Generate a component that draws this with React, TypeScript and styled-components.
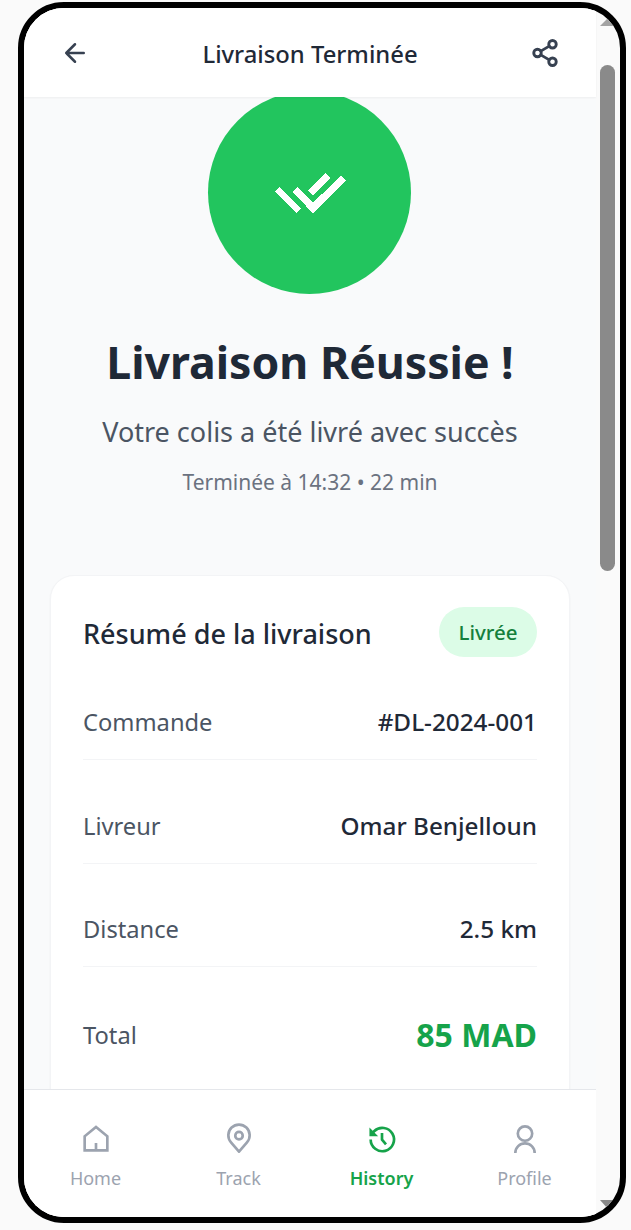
import React from "react";
import styled, { createGlobalStyle } from "styled-components";

const Global = createGlobalStyle`
  html, body { margin: 0; padding: 0; background: #fafafa; }
  body { font-family: "Noto Sans", "Open Sans", sans-serif; }
`;

const Page = styled.div`
  width: 631px;
  height: 1230px;
  padding: 2px 5px 7px 18px;
  box-sizing: border-box;
  overflow: hidden;
`;

const Phone = styled.div`
  position: relative;
  height: 100%;
  box-sizing: border-box;
  border: 6px solid #000;
  border-radius: 46px;
  overflow: hidden;
  display: flex;
  background: #fafafa;
`;

const Column = styled.div`
  width: 572px;
  display: flex;
  flex-direction: column;
  background: #f9fafb;
`;

const Header = styled.header`
  height: 89px;
  flex: none;
  box-sizing: border-box;
  background: #fff;
  position: relative;
  z-index: 2;
  box-shadow: 0 1px 2px rgba(0, 0, 0, 0.05);
  display: flex;
  align-items: center;
  justify-content: space-between;
  padding: 0 36px;
`;

const HeaderTitle = styled.h1`
  margin: 2px 0 0;
  font-size: 23.8px;
  font-weight: 500;
  color: #1f2937;
`;

const HeaderIcon = styled.svg`
  width: 30px;
  height: 30px;
  display: block;
  color: #374151;
`;

const Main = styled.main`
  flex: 1;
  min-height: 0;
  overflow: hidden;
  padding: 0 26px;
  display: flex;
  flex-direction: column;
  align-items: center;
`;

const Circle = styled.div`
  width: 203px;
  height: 203px;
  flex: none;
  margin: -6px 1px 0 0;
  border-radius: 50%;
  background: #22c55e;
  display: flex;
  align-items: center;
  justify-content: center;
`;

const Heading = styled.h2`
  margin: 38px 0 0;
  font-size: 44.6px;
  line-height: 60px;
  font-weight: 700;
  color: #1f2937;
`;

const Sub = styled.p`
  margin: 20px 0 0;
  font-size: 27px;
  line-height: 40px;
  color: #4b5563;
`;

const Meta = styled.p`
  margin: 15px 0 0;
  font-size: 21px;
  line-height: 30px;
  color: #6b7280;
`;

const Card = styled.section`
  align-self: stretch;
  margin-top: 78px;
  flex: none;
  height: 600px;
  box-sizing: border-box;
  background: #fff;
  border: 1px solid #f3f4f6;
  border-radius: 24px;
  box-shadow: 0 1px 2px rgba(0, 0, 0, 0.05);
  padding: 31px 32px;
`;

const CardHead = styled.div`
  display: flex;
  align-items: center;
  justify-content: space-between;
  margin-bottom: 48px;
`;

const CardTitle = styled.h3`
  margin: 2px 0 0;
  font-size: 27px;
  font-weight: 500;
  color: #1f2937;
`;

const Badge = styled.span`
  height: 50px;
  width: 98px;
  box-sizing: border-box;
  display: flex;
  align-items: center;
  justify-content: center;
  border-radius: 25px;
  background: #dcfce7;
  color: #15803d;
  font-size: 20.5px;
  font-weight: 500;
`;

const Row = styled.div<{ $last?: boolean }>`
  display: flex;
  align-items: center;
  justify-content: space-between;
  min-height: 34px;
  padding-bottom: ${(p) => (p.$last ? "0" : "20px")};
  margin-bottom: ${(p) => (p.$last ? "0" : "48.5px")};
  border-bottom: ${(p) => (p.$last ? "none" : "1px solid #f3f4f6")};
`;

const RowLabel = styled.span`
  font-size: 23.7px;
  line-height: 34px;
  color: #4b5563;
`;

const RowValue = styled.span<{ $accent?: boolean }>`
  font-size: ${(p) => (p.$accent ? "32px" : "24.3px")};
  line-height: ${(p) => (p.$accent ? "38px" : "34px")};
  font-weight: ${(p) => (p.$accent ? 700 : 500)};
  color: ${(p) => (p.$accent ? "#16a34a" : "#1f2937")};
`;

const Nav = styled.nav`
  height: 128px;
  flex: none;
  box-sizing: border-box;
  background: #fff;
  border-top: 1px solid #e5e7eb;
  display: grid;
  grid-template-columns: repeat(4, 1fr);
  position: relative;
  z-index: 2;
`;

const NavItem = styled.div<{ $active?: boolean }>`
  display: flex;
  flex-direction: column;
  align-items: center;
  padding-top: 33px;
  color: ${(p) => (p.$active ? "#16a34a" : "#9ca3af")};
  font-size: 18px;
  line-height: 24px;
  font-weight: ${(p) => (p.$active ? 600 : 400)};
`;

const NavIcon = styled.svg`
  width: 32px;
  height: 32px;
  display: block;
  margin-bottom: 11px;
`;

const Scrollbar = styled.div`
  flex: 1;
  display: flex;
  flex-direction: column;
  align-items: flex-start;
  padding-left: 4px;
`;

const Arrow = styled.div<{ $down?: boolean }>`
  width: 0;
  height: 0;
  flex: none;
  border-left: 8px solid transparent;
  border-right: 8px solid transparent;
  ${(p) =>
    p.$down
      ? "border-top: 9px solid #8a8a8a; margin-top: 629px;"
      : "border-bottom: 8px solid #a3a3a3; margin-top: 10px;"}
`;

const Thumb = styled.div`
  width: 15px;
  height: 506px;
  flex: none;
  margin-top: 39px;
  background: #8a8a8a;
  border-radius: 8px;
`;

const stroke = { fill: "none", stroke: "currentColor", strokeWidth: 2, strokeLinecap: "round", strokeLinejoin: "round" } as const;

export default function App() {
  return (
    <>
      <Global />
      <Page>
        <Phone>
          <Column>
            <Header>
              <HeaderIcon viewBox="0 0 24 24" {...stroke}>
                <path d="M12 19l-7-7 7-7M5 12h14" />
              </HeaderIcon>
              <HeaderTitle>Livraison Terminée</HeaderTitle>
              <HeaderIcon viewBox="0 0 24 24" {...stroke} strokeWidth={2.3}>
                <circle cx="18" cy="5" r="3" />
                <circle cx="6" cy="12" r="3" />
                <circle cx="18" cy="19" r="3" />
                <path d="M8.6 13.5l6.8 4M15.4 6.5l-6.8 4" />
              </HeaderIcon>
            </Header>
            <Main>
              <Circle>
                <svg width="72" height="44" viewBox="274 170 72 44" fill="#fff" shapeRendering="crispEdges">
                  <polygon points="279,186 301,207.5 296.5,212 274.5,190.5" />
                  <polygon points="292.5,190.5 297,186 313,201.5 341,175 346,180 313,212.5" />
                  <polygon points="308.5,189.5 325,172 330,177 313,194.5" />
                </svg>
              </Circle>
              <Heading>Livraison Réussie !</Heading>
              <Sub>Votre colis a été livré avec succès</Sub>
              <Meta>Terminée à 14:32 • 22 min</Meta>
              <Card>
                <CardHead>
                  <CardTitle>Résumé de la livraison</CardTitle>
                  <Badge>Livrée</Badge>
                </CardHead>
                <Row>
                  <RowLabel>Commande</RowLabel>
                  <RowValue>#DL-2024-001</RowValue>
                </Row>
                <Row>
                  <RowLabel>Livreur</RowLabel>
                  <RowValue>Omar Benjelloun</RowValue>
                </Row>
                <Row>
                  <RowLabel>Distance</RowLabel>
                  <RowValue>2.5 km</RowValue>
                </Row>
                <Row $last>
                  <RowLabel>Total</RowLabel>
                  <RowValue $accent>85 MAD</RowValue>
                </Row>
              </Card>
            </Main>
            <Nav>
              <NavItem>
                <NavIcon viewBox="0 0 24 24" {...stroke} strokeLinecap="butt" strokeLinejoin="miter">
                  <path d="M3.5 20.5V10L12 3l8.5 7v10.5zM12 20.5V15" />
                </NavIcon>
                Home
              </NavItem>
              <NavItem>
                <NavIcon viewBox="0 0 24 24" {...stroke}>
                  <path d="M12 21.5L6 14.5a8 8 0 1 1 12 0z" />
                  <circle cx="12" cy="9.5" r="2.8" />
                </NavIcon>
                Track
              </NavItem>
              <NavItem $active>
                <NavIcon viewBox="0 0 24 24" {...stroke} strokeLinecap="butt">
                  <path d="M3.5 12.4a8.75 8.75 0 1 0 2.6-6.2L3.8 8.5" />
                  <path d="M2.6 3.4v6.5h6.5z" fill="currentColor" stroke="none" />
                  <path d="M12 7.5v5l3 3.5" />
                </NavIcon>
                History
              </NavItem>
              <NavItem>
                <NavIcon viewBox="0 0 24 24" {...stroke} strokeLinecap="butt">
                  <circle cx="12" cy="7.9" r="5.4" />
                  <path d="M4.75 22.5a7.25 7.25 0 0 1 14.5 0" />
                </NavIcon>
                Profile
              </NavItem>
            </Nav>
          </Column>
          <Scrollbar>
            <Arrow />
            <Thumb />
            <Arrow $down />
          </Scrollbar>
        </Phone>
      </Page>
    </>
  );
}
